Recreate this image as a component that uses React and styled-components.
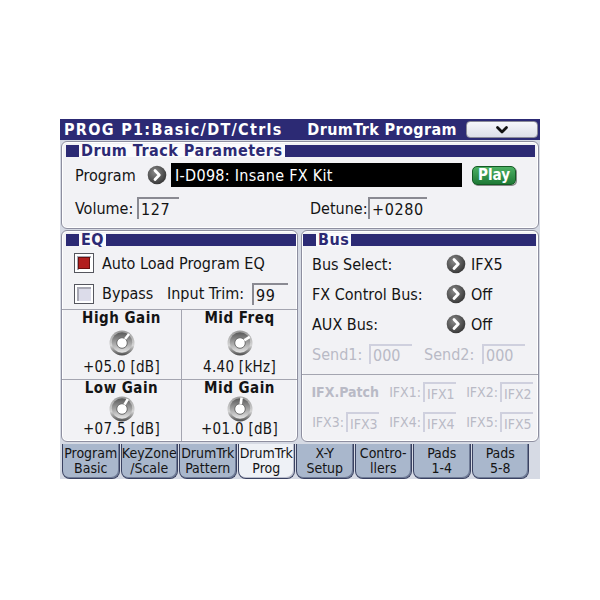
import React from 'react'
import styled, { createGlobalStyle } from 'styled-components'

const NAVY = '#2c2a74'
const FONT = '"DejaVu Sans Condensed", "DejaVu Sans", sans-serif'
const DIM = '#b9bac6'

const GlobalStyle = createGlobalStyle`
  body {
    margin: 0;
    background: #fff;
    font-family: ${FONT};
    color: #141414;
  }
`

const Screen = styled.div`
  width: 480px;
  margin: 119px 0 0 60px;
  background: #d6dae4;
  display: flex;
  flex-direction: column;
`

const TitleBar = styled.div`
  height: 21px;
  background: ${NAVY};
  display: flex;
  align-items: center;
  padding: 0 2px 0 4px;
  color: #fff;
  font-weight: bold;
  font-size: 16px;
`

const TitleText = styled.span`
  flex: ${p => (p.$grow ? 1 : 'none')};
  margin-right: ${p => (p.$grow ? 0 : 9)}px;
  letter-spacing: ${p => (p.$grow ? 1.3 : 0.4)}px;
`

const DropButton = styled.div`
  width: 70px;
  height: 15px;
  background: linear-gradient(#f6f7fb, #dcdee8);
  border: 1px solid #8a8a98;
  border-radius: 4px;
  display: flex;
  align-items: center;
  justify-content: center;
`

const Body = styled.div`
  display: flex;
  flex-direction: column;
  gap: 1px;
  padding: 1px 1px 0;
`

const Panel = styled.div`
  background: #f2f2f5;
  border: 1.5px solid #8e8fa0;
  box-shadow: inset 0 0 0 1px #fff;
  border-radius: 6px;
  height: ${p => p.$h}px;
  width: ${p => (p.$w ? `${p.$w}px` : 'auto')};
  box-sizing: border-box;
  display: flex;
  flex-direction: column;
  overflow: hidden;
`

const Header = styled.div`
  display: flex;
  align-items: center;
  height: 13px;
  margin: 2px ${p => p.$right}px 0 ${p => p.$left}px;
`

const HeaderBlock = styled.span`
  width: 13px;
  height: 12px;
  background: ${NAVY};
`

const HeaderTitle = styled.span`
  color: ${NAVY};
  font-weight: bold;
  font-size: 16px;
  line-height: 13px;
  letter-spacing: 0.5px;
  padding: 0 2px;
  background: #fbfbfd;
`

const HeaderBar = styled.span`
  flex: 1;
  height: 12px;
  background: ${NAVY};
`

const Row = styled.div`
  display: flex;
  align-items: center;
  height: ${p => p.$h || 24}px;
  margin-top: ${p => p.$mt || 0}px;
  padding-left: ${p => p.$pl || 0}px;
  font-size: 16px;
`

const Label = styled.span`
  width: ${p => (p.$w ? `${p.$w}px` : 'auto')};
  flex: none;
  color: ${p => (p.$dim ? DIM : 'inherit')};
  font-size: ${p => p.$size || 16}px;
  font-weight: ${p => (p.$bold ? 'bold' : 'normal')};
`

const Field = styled.span`
  width: ${p => p.$w}px;
  height: ${p => p.$h || 22}px;
  box-sizing: border-box;
  border-top: 2px solid ${p => (p.$dim ? '#cfd0de' : '#8a8a92')};
  border-left: 2px solid ${p => (p.$dim ? '#cfd0de' : '#8a8a92')};
  padding: 1px 0 0 2px;
  display: flex;
  align-items: center;
  color: ${p => (p.$dim ? DIM : 'inherit')};
  font-size: ${p => p.$size || 16}px;
  letter-spacing: ${p => (p.$dim ? 0 : 0.6)}px;
  flex: none;
`

const NameField = styled.span`
  width: 291px;
  height: 24px;
  background: #000;
  color: #fff;
  display: flex;
  align-items: center;
  padding-left: 4px;
  box-sizing: border-box;
  font-size: 16px;
  letter-spacing: 0.3px;
`

const PlayButton = styled.span`
  width: 44px;
  height: 19px;
  margin-left: 10px;
  box-sizing: border-box;
  background: linear-gradient(#4cb063, #1f7a36);
  border: 1px solid #145a24;
  border-radius: 5px;
  box-shadow: 1px 1px 0 #8a8a8a;
  color: #fff;
  font-weight: bold;
  font-size: 15px;
  display: flex;
  align-items: center;
  justify-content: center;
`

const Spacer = styled.span`
  width: ${p => p.$w}px;
  flex: none;
`

const Split = styled.div`
  display: flex;
  gap: 3px;
`

const CheckBox = styled.span`
  width: 20px;
  height: 20px;
  box-sizing: border-box;
  border: 1px solid #55565e;
  box-shadow: inset 0 0 0 2px #fff, inset 1px 1px 0 3px #a8a8b4;
  background: ${p => (p.$on ? '#fff' : '#dcdcea')};
  display: flex;
  align-items: center;
  justify-content: center;
  margin-right: 8px;
  flex: none;
`

const CheckMark = styled.span`
  width: 12px;
  height: 12px;
  background: #b11e1e;
  border: 1px solid #6a1010;
  box-sizing: border-box;
`

const EqGrid = styled.div`
  flex: 1;
  margin-top: 5px;
  display: grid;
  grid-template-columns: 119px 1fr;
  grid-template-rows: 69px 1fr;
  border-top: 1px solid #a4a5b0;
`

const EqCell = styled.div`
  display: flex;
  flex-direction: column;
  align-items: center;
  justify-content: space-between;
  padding: 1px 0 4px;
  border-left: ${p => (p.$right ? '1px solid #a4a5b0' : 'none')};
  border-top: ${p => (p.$lower ? '1px solid #a4a5b0' : 'none')};
`

const CellTitle = styled.span`
  font-weight: bold;
  font-size: 15px;
  line-height: 15px;
  letter-spacing: 0.5px;
`

const CellValue = styled.span`
  font-size: 15px;
  line-height: 15px;
  letter-spacing: 0.3px;
`

const BusRows = styled.div`
  display: flex;
  flex-direction: column;
  padding: 3px 0 0 10px;
`

const Divider = styled.div`
  height: 1px;
  background: #a4a5b0;
  margin-top: 5px;
`

const IfxGrid = styled.div`
  display: grid;
  grid-template-columns: 82px 77px 77px;
  grid-template-rows: 30px 30px;
  padding-top: 2px;
`

const IfxCell = styled.div`
  display: flex;
  align-items: center;
  justify-content: flex-end;
  gap: 2px;
  padding-right: 5px;
`

const TabRow = styled.div`
  display: grid;
  grid-template-columns: repeat(8, 57.5px);
  gap: 1px;
  padding: 2px 0 0 2px;
  height: 35px;
`

const Tab = styled.div`
  box-sizing: border-box;
  background: ${p => (p.$active ? '#eef1f6' : '#a9b7cc')};
  border: 1px solid #3a4262;
  border-top: none;
  border-radius: 0 0 8px 8px;
  box-shadow: inset -1px -1px 0 ${p => (p.$active ? '#b8bccb' : '#6f7b96')};
  font-size: 14px;
  line-height: 15px;
  text-align: center;
  padding-top: 2px;
  color: #141414;
  white-space: pre;
`

function Arrow() {
  return (
    <svg width="20" height="20" viewBox="0 0 20 20" style={{ flex: 'none' }}>
      <defs>
        <radialGradient id="ag" cx="40%" cy="35%" r="65%">
          <stop offset="0" stopColor="#8a8a8a" />
          <stop offset="1" stopColor="#3a3a3a" />
        </radialGradient>
      </defs>
      <circle cx="10" cy="10" r="9.3" fill="url(#ag)" />
      <path d="M8 5.5 L12.3 10 L8 14.5" fill="none" stroke="#fff" strokeWidth="2.8" strokeLinecap="round" strokeLinejoin="round" />
    </svg>
  )
}

function Chevron() {
  return (
    <svg width="14" height="10" viewBox="0 0 14 10">
      <path d="M2.5 2.5 L7 7 L11.5 2.5" fill="none" stroke="#111" strokeWidth="2.8" strokeLinecap="round" strokeLinejoin="round" />
    </svg>
  )
}

function Knob({ angle }) {
  const a = (angle * Math.PI) / 180
  const x1 = 13 + Math.sin(a) * 5
  const y1 = 13 - Math.cos(a) * 5
  const x2 = 13 + Math.sin(a) * 11.5
  const y2 = 13 - Math.cos(a) * 11.5
  return (
    <svg width="26" height="26" viewBox="0 0 26 26">
      <defs>
        <linearGradient id="rim" x1="0" y1="0" x2="0" y2="1">
          <stop offset="0" stopColor="#9a9a9a" />
          <stop offset="0.6" stopColor="#d4d4d4" />
          <stop offset="1" stopColor="#4a4a4a" />
        </linearGradient>
        <linearGradient id="face" x1="0" y1="0" x2="0" y2="1">
          <stop offset="0" stopColor="#5a5a5a" />
          <stop offset="1" stopColor="#e6e6e6" />
        </linearGradient>
      </defs>
      <circle cx="13" cy="13" r="12.5" fill="url(#rim)" />
      <circle cx="13" cy="12.5" r="10.2" fill="url(#face)" />
      <circle cx="13" cy="13" r="5.3" fill="#fff" stroke="#6a6a6a" strokeWidth="1" />
      <line x1={x1} y1={y1} x2={x2} y2={y2} stroke="#fff" strokeWidth="2.6" />
    </svg>
  )
}

function SectionHeader({ title, left = 4, right = 4 }) {
  return (
    <Header $left={left} $right={right}>
      <HeaderBlock />
      <HeaderTitle>{title}</HeaderTitle>
      <HeaderBar />
    </Header>
  )
}

const eqCells = [
  { title: 'High Gain', value: '+05.0 [dB]', angle: 38 },
  { title: 'Mid Freq', value: '4.40 [kHz]', angle: 58, right: true },
  { title: 'Low Gain', value: '+07.5 [dB]', angle: 30, lower: true },
  { title: 'Mid Gain', value: '+01.0 [dB]', angle: 8, right: true, lower: true },
]

const busRows = [
  { label: 'Bus Select:', value: 'IFX5' },
  { label: 'FX Control Bus:', value: 'Off' },
  { label: 'AUX Bus:', value: 'Off' },
]

const ifxCells = [
  { bold: 'IFX.Patch' },
  { label: 'IFX1:', value: 'IFX1' },
  { label: 'IFX2:', value: 'IFX2' },
  { label: 'IFX3:', value: 'IFX3' },
  { label: 'IFX4:', value: 'IFX4' },
  { label: 'IFX5:', value: 'IFX5' },
]

const tabs = [
  'Program\nBasic',
  'KeyZone\n/Scale',
  'DrumTrk\nPattern',
  'DrumTrk\nProg',
  'X-Y\nSetup',
  'Contro-\nllers',
  'Pads\n1-4',
  'Pads\n5-8',
]

export default function App() {
  return (
    <>
      <GlobalStyle />
      <Screen>
        <TitleBar>
          <TitleText $grow>PROG P1:Basic/DT/Ctrls</TitleText>
          <TitleText>DrumTrk Program</TitleText>
          <DropButton>
            <Chevron />
          </DropButton>
        </TitleBar>

        <Body>
          <Panel $h={88}>
            <SectionHeader title="Drum Track Parameters" left={4} right={3} />
            <Row $mt={6} $pl={13}>
              <Label $w={72}>Program</Label>
              <Arrow />
              <Spacer $w={4} />
              <NameField>I-D098: Insane FX Kit</NameField>
              <PlayButton>Play</PlayButton>
            </Row>
            <Row $mt={10} $h={22} $pl={13}>
              <Label $w={62}>Volume:</Label>
              <Field $w={42}>127</Field>
              <Spacer $w={131} />
              <Label $w={58}>Detune:</Label>
              <Field $w={59}>+0280</Field>
            </Row>
          </Panel>

          <Split>
            <Panel $h={212} $w={237}>
              <SectionHeader title="EQ" left={4} right={1} />
              <Row $mt={7} $h={20} $pl={12}>
                <CheckBox $on>
                  <CheckMark />
                </CheckBox>
                <Label>Auto Load Program EQ</Label>
              </Row>
              <Row $mt={10} $h={21} $pl={12}>
                <CheckBox />
                <Label $w={65}>Bypass</Label>
                <Label $w={85}>Input Trim:</Label>
                <Field $w={36}>99</Field>
              </Row>
              <EqGrid>
                {eqCells.map(c => (
                  <EqCell key={c.title} $right={c.right} $lower={c.lower}>
                    <CellTitle>{c.title}</CellTitle>
                    <Knob angle={c.angle} />
                    <CellValue>{c.value}</CellValue>
                  </EqCell>
                ))}
              </EqGrid>
            </Panel>

            <Panel $h={212} $w={238}>
              <SectionHeader title="Bus" left={1} right={2} />
              <BusRows>
                {busRows.map(r => (
                  <Row key={r.label} $h={30}>
                    <Label $w={134}>{r.label}</Label>
                    <Arrow />
                    <Spacer $w={5} />
                    <Label>{r.value}</Label>
                  </Row>
                ))}
                <Row $h={30}>
                  <Label $w={57} $dim>Send1:</Label>
                  <Field $w={43} $h={20} $dim>000</Field>
                  <Spacer $w={12} />
                  <Label $w={58} $dim>Send2:</Label>
                  <Field $w={43} $h={20} $dim>000</Field>
                </Row>
              </BusRows>
              <Divider />
              <IfxGrid>
                {ifxCells.map((c, i) => (
                  <IfxCell key={i}>
                    {c.bold ? (
                      <Label $dim $bold $size={14}>{c.bold}</Label>
                    ) : (
                      <>
                        <Label $dim $size={14}>{c.label}</Label>
                        <Field $w={33} $h={20} $dim $size={14}>{c.value}</Field>
                      </>
                    )}
                  </IfxCell>
                ))}
              </IfxGrid>
            </Panel>
          </Split>
        </Body>

        <TabRow>
          {tabs.map(t => (
            <Tab key={t} $active={t === 'DrumTrk\nProg'}>{t}</Tab>
          ))}
        </TabRow>
      </Screen>
    </>
  )
}
